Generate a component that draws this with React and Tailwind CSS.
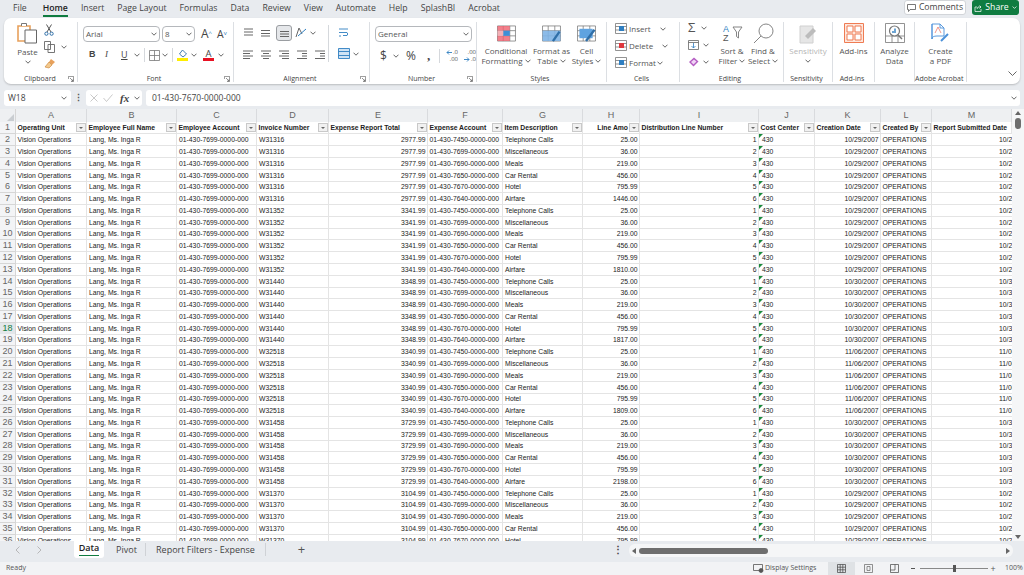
import React from "react";

const FONT = "font-['Open_Sans','Noto_Sans',sans-serif]";
const GRID_COLS = "grid grid-cols-[16px_71px_90px_80px_72px_99px_75px_80px_57px_119px_56px_66px_51px_80px]";

const tabs = ["File", "Home", "Insert", "Page Layout", "Formulas", "Data", "Review", "View", "Automate", "Help", "SplashBI", "Acrobat"];
const headers = [
  ["A", "Operating Unit"],
  ["B", "Employee Full Name"],
  ["C", "Employee Account"],
  ["D", "Invoice Number"],
  ["E", "Expense Report Total"],
  ["F", "Expense Account"],
  ["G", "Item Description"],
  ["H", "Line Amo"],
  ["I", "Distribution Line Number"],
  ["J", "Cost Center"],
  ["K", "Creation Date"],
  ["L", "Created By"],
  ["M", "Report Submitted Date"],
];
const groups = [
  ["W31316", "2977.99", "1446.00", "10/29/2007"],
  ["W31352", "3341.99", "1810.00", "10/29/2007"],
  ["W31440", "3348.99", "1817.00", "10/30/2007"],
  ["W32518", "3340.99", "1809.00", "11/06/2007"],
  ["W31458", "3729.99", "2198.00", "10/30/2007"],
  ["W31370", "3104.99", "1573.00", "10/29/2007"],
];
const items = [
  ["Telephone Calls", "7450", "25.00"],
  ["Miscellaneous", "7699", "36.00"],
  ["Meals", "7690", "219.00"],
  ["Car Rental", "7650", "456.00"],
  ["Hotel", "7670", "795.99"],
  ["Airfare", "7640", null],
];

const rows = [];
for (let r = 2; r <= 37; r++) {
  const g = groups[Math.floor((r - 2) / 6)];
  const i = (r - 2) % 6;
  rows.push({ n: r, invoice: g[0], total: g[1], account: items[i][1], item: items[i][0], amount: items[i][2] || g[2], line: i + 1, date: g[3] });
}

function Chev({ className = "" }) {
  return (
    <svg className={`w-[6px] h-[4px] shrink-0 ${className}`} viewBox="0 0 6 4" fill="none" stroke="#555" strokeWidth="0.9">
      <path d="M0.5 0.7 3 3.2 5.5 0.7" />
    </svg>
  );
}

function Launcher() {
  return (
    <svg className="w-[6px] h-[6px] justify-self-end" viewBox="0 0 6 6" fill="none" stroke="#666" strokeWidth="0.7">
      <path d="M0.4 3V0.4H5.6V5.6H3M2 2 5 5M5 3.4V5H3.4" />
    </svg>
  );
}

function Group({ width, label, launcher, children }) {
  return (
    <div className="flex flex-col shrink-0 h-[60px] mt-[4px] border-r border-[#dcdfe3]" style={{ width }}>
      <div className="flex-1 min-h-0 flex">{children}</div>
      <div className="grid grid-cols-[1fr_auto_1fr] items-center h-[8px] pr-[3px] text-[7px] leading-[8px] text-[#444] translate-y-[1px]">
        <span />
        <span className="whitespace-nowrap">{label}</span>
        {launcher ? <Launcher /> : <span />}
      </div>
    </div>
  );
}

function Select({ value, w }) {
  return (
    <div className={`${w} h-[16px] shrink-0 bg-white border border-[#b5b8bc] rounded-[4px] flex items-center justify-between px-[2px] text-[8px] text-[#555]`}>
      <span>{value}</span>
      <Chev />
    </div>
  );
}

function Lines({ rows: lineRows }) {
  return (
    <svg className="w-[11px] h-[9px]" viewBox="0 0 11 9" fill="none" stroke="#555" strokeWidth="0.9">
      {lineRows.map(([a, b, y]) => (
        <path key={y} d={`M${a} ${y}H${b}`} />
      ))}
    </svg>
  );
}

function Bigbtn({ label1, label2, chevOnSecond, width, grey, children }) {
  const tone = grey ? "text-[#b5b5b5]" : "text-[#555]";
  return (
    <div className={`flex flex-col items-center ${tone} text-[8px] leading-[10px]`} style={{ width }}>
      <div className="h-[22px] flex items-center justify-center">{children}</div>
      <div className="mt-[2px] whitespace-nowrap">{label1}</div>
      <div className="flex items-center gap-[2px] whitespace-nowrap h-[10px]">
        {label2}
        {chevOnSecond && <Chev />}
      </div>
    </div>
  );
}

function TableIcon({ children }) {
  return (
    <svg className="w-[21px] h-[17px]" viewBox="0 0 21 18" fill="none">
      <path d="M1 1H20V17H1Z M1 6H20 M1 11.5H20 M7 1V17 M14 1V17" stroke="#777" strokeWidth="0.8" />
      {children}
    </svg>
  );
}

function Clipboard() {
  return (
    <svg className="w-[21px] h-[22px]" viewBox="0 0 21 22" fill="none">
      <path d="M1 4H13V19H1Z" fill="#fff" stroke="#e8a15c" strokeWidth="1.6" />
      <path d="M4.5 4V1.5H9.5V4" fill="#fff" stroke="#777" strokeWidth="1" />
      <path d="M8 8H19.5V21H8Z" fill="#fff" stroke="#666" strokeWidth="1" />
    </svg>
  );
}

function DecimalIcon({ top, bottom, arrow }) {
  return (
    <div className="w-[14px] flex flex-col items-end text-[6px] leading-[7px] text-[#555]">
      <div className="flex items-center gap-[1px]">
        {arrow === "top" && (
          <svg className="w-[6px] h-[5px]" viewBox="0 0 6 5" fill="none" stroke="#2f7fc1" strokeWidth="0.9">
            <path d="M6 2.5H1M3 0.5 1 2.5 3 4.5" />
          </svg>
        )}
        {top}
      </div>
      <div className="flex items-center gap-[1px]">
        {arrow === "bottom" && (
          <svg className="w-[6px] h-[5px]" viewBox="0 0 6 5" fill="none" stroke="#2f7fc1" strokeWidth="0.9">
            <path d="M0 2.5H5M3 0.5 5 2.5 3 4.5" />
          </svg>
        )}
        {bottom}
      </div>
    </div>
  );
}

function Row({ row }) {
  const cell = "border-r border-b border-[#e4e4e4] px-[1.5px] overflow-hidden whitespace-nowrap";
  const active = row.n === 18;
  return (
    <div className={`${GRID_COLS} h-[11.79px] leading-[12px]`}>
      <div className={`border-r border-b border-[#d6d6d6] text-center text-[9px] leading-[11px] ${active ? "text-[#107c41] bg-[#e3e7ea]" : "text-[#666] bg-[#f3f4f6]"}`}>{row.n}</div>
      <div className={cell}>Vision Operations</div>
      <div className={`${cell} pl-[2px]`}>Lang, Ms. Inga R</div>
      <div className={`${cell} pl-[2px]`}>01-430-7699-0000-000</div>
      <div className={`${cell} pl-[2px]`}>{row.invoice}</div>
      <div className={`${cell} text-right`}>{row.total}</div>
      <div className={cell}>01-430-{row.account}-0000-000</div>
      <div className={`${cell} pl-[2px]`}>{row.item}</div>
      <div className={`${cell} text-right`}>{row.amount}</div>
      <div className={`${cell} text-right`}>{row.line}</div>
      <div className={`${cell} relative pl-[3px]`}>
        <span className="absolute left-0 top-0 w-0 h-0 border-t-[4px] border-r-[4px] border-t-[#1a8a3c] border-r-transparent" />
        430
      </div>
      <div className={`${cell} text-right`}>{row.date}</div>
      <div className={cell}>OPERATIONS</div>
      <div className="border-b border-[#e4e4e4] overflow-hidden whitespace-nowrap pl-[67px]">{row.date}</div>
    </div>
  );
}

function Ribbon() {
  return (
    <div className="mx-[4px] h-[66px] bg-white rounded-[7px] shadow-[0_1px_2px_rgba(0,0,0,0.2)] flex pl-[2px]">
      <Group width="72px" label="Clipboard" launcher>
        <div className="w-[37px] pl-[6px] flex flex-col items-center text-[8px] text-[#555] leading-[10px]">
          <Clipboard />
          <div className="mt-[3px]">Paste</div>
          <Chev className="mt-[3px]" />
        </div>
        <div className="flex flex-col gap-[5px] pt-[2px] pl-[1px]">
          <svg className="w-[10px] h-[12px]" viewBox="0 0 10 12" fill="none" stroke="#2f6fa8" strokeWidth="1">
            <path d="M2.5 0.5 7 8M7.5 0.5 3 8" stroke="#555" />
            <circle cx="2.4" cy="9.7" r="1.6" />
            <circle cx="7.6" cy="9.7" r="1.6" />
          </svg>
          <div className="flex items-center gap-[6px]">
            <svg className="w-[11px] h-[12px]" viewBox="0 0 11 12" fill="none" stroke="#666" strokeWidth="0.9">
              <path d="M0.5 0.5H6.5V8.5H0.5ZM4 3.5H10.5V11.5H4Z" fill="#fff" />
            </svg>
            <Chev />
          </div>
          <svg className="w-[12px] h-[11px]" viewBox="0 0 12 11">
            <path d="M7 1 11 4 8 7 5 4Z" fill="#e8a15c" />
            <path d="M5 4 8 7 5 10 1 9Z" fill="#f3c98d" stroke="#c77d2e" strokeWidth="0.6" />
          </svg>
        </div>
      </Group>

      <Group width="156px" label="Font" launcher>
        <div className="pl-[5px] pt-[4px] flex flex-col gap-[6px]">
          <div className="flex items-center gap-[2px]">
            <Select value="Arial" w="w-[77px]" />
            <Select value="8" w="w-[33px]" />
            <span className="ml-[4px] text-[12px] leading-none text-[#444]">A<sup className="text-[6px] text-[#2f7fc1]">^</sup></span>
            <span className="ml-[3px] text-[10.5px] leading-none text-[#444]">A<sup className="text-[6px] text-[#2f7fc1]">v</sup></span>
          </div>
          <div className="flex items-center h-[14px] pl-[6px] text-[9px] text-[#444]">
            <span className="font-['Liberation_Sans'] font-bold w-[16px]">B</span>
            <span className="font-['Liberation_Serif'] italic w-[16px]">I</span>
            <span className="underline w-[13px]">U</span>
            <Chev />
            <span className="ml-[4px] mr-[3px] w-px h-[14px] bg-[#d5d8dc]" />
            <svg className="w-[11px] h-[11px] ml-[1px]" viewBox="0 0 11 11" fill="none" stroke="#777" strokeWidth="0.8">
              <path d="M0.5 0.5H10.5V10.5H0.5ZM5.5 0.5V10.5M0.5 5.5H10.5" />
            </svg>
            <Chev className="ml-[2px]" />
            <span className="ml-[4px] mr-[4px] w-px h-[14px] bg-[#d5d8dc]" />
            <div className="flex flex-col items-center w-[11px]">
              <svg className="w-[10px] h-[9px]" viewBox="0 0 10 9" fill="none" stroke="#2f6fa8" strokeWidth="0.9">
                <path d="M4.5 1 8.5 5 5 8 1.5 5Z" />
              </svg>
              <span className="w-[11px] h-[3px] bg-[#ffee00]" />
            </div>
            <Chev className="ml-[3px]" />
            <div className="flex flex-col items-center w-[11px] ml-[6px] text-[9.5px] leading-[9px] text-[#444]">
              A
              <span className="w-[11px] h-[3px] bg-[#e81123]" />
            </div>
            <Chev className="ml-[4px]" />
          </div>
        </div>
      </Group>

      <Group width="136px" label="Alignment" launcher>
        <div className="pl-[9px] pt-[3px] flex">
          <div className="flex flex-col gap-[8px] w-[85px]">
            <div className="flex items-center h-[15px]">
              <div className="w-[17px]"><Lines rows={[[1, 10, 1], [1, 10, 4], [1, 10, 7]]} /></div>
              <div className="w-[16px]"><Lines rows={[[1, 10, 2.5], [1, 10, 5.5], [1, 10, 8]]} /></div>
              <div className="w-[16px] h-[16px] mr-[3px] rounded-[3px] border border-[#9a9da1] bg-[#e5e7ea] flex items-center justify-center"><Lines rows={[[1, 10, 3.5], [1, 10, 6], [1, 10, 8.5]]} /></div>
              <svg className="w-[12px] h-[11px]" viewBox="0 0 12 11" fill="none" strokeWidth="1">
                <path d="M1 10 4 1 7 7" stroke="#666" />
                <path d="M3 9 11 2" stroke="#2f7fc1" />
              </svg>
              <Chev className="ml-[3px]" />
            </div>
            <div className="flex items-center h-[12px] gap-[7px]">
              <Lines rows={[[0, 10, 1], [0, 7, 3.5], [0, 10, 6], [0, 7, 8.5]]} />
              <Lines rows={[[0, 10, 1], [2, 8, 3.5], [0, 10, 6], [2, 8, 8.5]]} />
              <Lines rows={[[0, 10, 1], [3, 10, 3.5], [0, 10, 6], [3, 10, 8.5]]} />
              <Lines rows={[[0, 10, 1], [5, 10, 3.5], [5, 10, 6], [0, 10, 8.5]]} />
              <Lines rows={[[0, 10, 1], [5, 10, 3.5], [5, 10, 6], [0, 10, 8.5]]} />
            </div>
          </div>
          <div className="border-l border-[#d5d8dc] h-[37px] pl-[9px] flex flex-col gap-[10px] pt-[2px]">
            <svg className="w-[11px] h-[11px]" viewBox="0 0 11 11" fill="none" stroke="#2f7fc1" strokeWidth="0.9">
              <path d="M1 2H10M1 5.5H9Q10.5 7 9 8.5H5M1 9H3" />
            </svg>
            <div className="flex items-center gap-[3px]">
              <svg className="w-[12px] h-[11px]" viewBox="0 0 12 11" fill="#cfe3f5" stroke="#2f7fc1" strokeWidth="0.9">
                <path d="M0.5 0.5H11.5V10.5H0.5ZM0.5 3.5H11.5M0.5 7.5H11.5" />
              </svg>
              <Chev />
            </div>
          </div>
        </div>
      </Group>

      <Group width="107px" label="Number" launcher>
        <div className="pl-[5px] pt-[4px] flex flex-col gap-[6px]">
          <Select value="General" w="w-[97px]" />
          <div className="flex items-center h-[15px] pl-[5px] text-[#444]">
            <span className="text-[12px] w-[11px]">$</span>
            <Chev className="ml-[2px]" />
            <span className="text-[12px] ml-[7px] w-[17px]">%</span>
            <span className="font-bold text-[13px] ml-[4px] w-[8px] font-['Liberation_Serif'] leading-[10px]">,</span>
            <span className="ml-[4px] w-px h-[14px] bg-[#d5d8dc]" />
            <span className="ml-[4px]"><DecimalIcon top=".0" bottom=".00" arrow="top" /></span>
            <span className="ml-[4px]"><DecimalIcon top=".00" bottom=".0" arrow="bottom" /></span>
          </div>
        </div>
      </Group>

      <Group width="130px" label="Styles">
        <div className="flex pl-[4px]">
          <Bigbtn label1="Conditional" label2="Formatting" chevOnSecond width="50px">
            <TableIcon>
              <path d="M1 1H14V6H1ZM1 11.5H14V17H1Z" fill="#f0606e" fillOpacity="0.8" />
              <path d="M7 6H14V11.5H7Z" fill="#3f8fd6" />
              <path d="M1 6H7V11.5H1Z" fill="#f4b0b6" />
            </TableIcon>
          </Bigbtn>
          <Bigbtn label1="Format as" label2="Table" chevOnSecond width="41px">
            <TableIcon>
              <path d="M1 6H20V17H1Z" fill="#7fb4e6" fillOpacity="0.9" />
              <path d="M12 17 19 7" stroke="#2f6fa8" strokeWidth="2.5" />
            </TableIcon>
          </Bigbtn>
          <Bigbtn label1="Cell" label2="Styles" chevOnSecond width="29px">
            <TableIcon>
              <path d="M3 4H17V14H3Z" fill="#5fa3e0" />
              <path d="M10 17 19 5" stroke="#2f6fa8" strokeWidth="2.5" />
            </TableIcon>
          </Bigbtn>
        </div>
      </Group>

      <Group width="73px" label="Cells">
        <div className="pl-[8px] pt-[1px] flex flex-col gap-[6px] text-[8px] leading-[11px] text-[#555]">
          {[
            ["Insert", "#2f7fc1", "ml-[9px]"],
            ["Delete", "#e0393e", "ml-[9px]"],
            ["Format", "#2f7fc1", "ml-[1px]"],
          ].map(([t, c, gap]) => (
            <div key={t} className="flex items-center h-[11px]">
              <svg className="w-[12px] h-[11px] mr-[2px]" viewBox="0 0 12 11" fill="none" stroke="#777" strokeWidth="0.8">
                <path d="M0.5 0.5H11.5V10.5H0.5ZM0.5 3.5H11.5M0.5 7H11.5" />
                <path d="M4 3H9V8H4Z" fill={c} stroke="none" />
              </svg>
              {t}
              <Chev className={gap} />
            </div>
          ))}
        </div>
      </Group>

      <Group width="104px" label="Editing">
        <div className="pl-[8px] flex flex-col gap-[5px] w-[36px]">
          <div className="flex items-center gap-[6px] h-[12px] text-[13px] text-[#555]">Σ<Chev /></div>
          <div className="flex items-center gap-[4px] h-[12px]">
            <svg className="w-[11px] h-[10px] shrink-0" viewBox="0 0 11 10" fill="none" stroke="#666" strokeWidth="0.8">
              <path d="M0.5 0.5H10.5V9.5H0.5ZM0.5 2.5H10.5" />
              <path d="M5.5 3V8M3.5 6 5.5 8 7.5 6" stroke="#2f7fc1" />
            </svg>
            <Chev />
          </div>
          <div className="flex items-center gap-[4px] h-[12px]">
            <svg className="w-[11px] h-[10px] shrink-0" viewBox="0 0 11 10">
              <path d="M1 5 6 0.5 10.5 4.5 5.5 9.5Z" fill="#b45cc2" />
              <path d="M3 5 6 2.5 8.5 4.5 5.5 7.5Z" fill="#f0d4f5" />
            </svg>
            <Chev />
          </div>
        </div>
        <Bigbtn label1="Sort &" label2="Filter" chevOnSecond width="32px">
          <svg className="w-[21px] h-[20px]" viewBox="0 0 21 20" fill="none">
            <path d="M11 4H20L16.5 9V15L14.5 13.5V9Z" stroke="#777" strokeWidth="0.9" />
            <text x="1" y="8.5" fontSize="9" fill="#2f7fc1" fontFamily="Liberation Sans">A</text>
            <text x="1" y="18" fontSize="9" fill="#555" fontFamily="Liberation Sans">Z</text>
          </svg>
        </Bigbtn>
        <Bigbtn label1="Find &" label2="Select" chevOnSecond width="30px">
          <svg className="w-[21px] h-[21px]" viewBox="0 0 21 21" fill="none" stroke="#777" strokeWidth="0.9">
            <circle cx="13" cy="8" r="7" />
            <path d="M8 13 1 20" />
          </svg>
        </Bigbtn>
      </Group>

      <Group width="49px" label="Sensitivity">
        <Bigbtn label1="Sensitivity" chevOnSecond width="48px" grey>
          <svg className="w-[19px] h-[21px]" viewBox="0 0 19 21">
            <path d="M1 3H14V20H1Z" fill="#e6e6e6" stroke="#d0d0d0" />
            <path d="M6 13 14 5 17 8 9 16Z" fill="#bcbcbc" />
          </svg>
        </Bigbtn>
      </Group>

      <Group width="42px" label="Add-ins">
        <Bigbtn label1="Add-ins" width="41px">
          <svg className="w-[20px] h-[20px]" viewBox="0 0 20 20" fill="none" stroke="#ef7b52" strokeWidth="1">
            <path d="M0.5 0.5H19.5V19.5H0.5Z" fill="#fde7dd" />
            <path d="M3 3H9V9H3ZM11 3H17V9H11ZM3 11H9V17H3ZM11 11H17V17H11Z" fill="#fff" />
          </svg>
        </Bigbtn>
      </Group>

      <Group width="40px" label="">
        <Bigbtn label1="Analyze" label2="Data" width="39px">
          <svg className="w-[20px] h-[20px]" viewBox="0 0 20 20" fill="none" stroke="#777" strokeWidth="0.8">
            <path d="M0.5 0.5H19.5V19.5H0.5ZM0.5 13H19.5M7 13V19.5M13 13V19.5" />
            <circle cx="9.5" cy="8" r="5" fill="#fff" strokeWidth="1.2" />
            <path d="M8 10V8M10 10V5.5" stroke="#2f7fc1" strokeWidth="1.4" />
            <path d="M13 12 17 16" strokeWidth="1.4" />
          </svg>
        </Bigbtn>
      </Group>

      <Group width="52px" label="Adobe Acrobat">
        <Bigbtn label1="Create" label2="a PDF" width="51px">
          <svg className="w-[19px] h-[20px]" viewBox="0 0 19 20" fill="none" stroke="#4a90d9" strokeWidth="0.9">
            <path d="M1 1H9L13 5V13H6Q1 13 1 16ZM1 1V16M9 1V5H13" />
            <path d="M4 10 7 4 10 10" stroke="#e86a5c" strokeWidth="0.7" />
            <path d="M10 18 17 11" strokeWidth="2" />
          </svg>
        </Bigbtn>
      </Group>

      <div className="flex-1 flex items-end justify-end pr-[3px] pb-[8px]">
        <svg className="w-[9px] h-[5px]" viewBox="0 0 9 5" fill="none" stroke="#555" strokeWidth="0.9">
          <path d="M0.5 0.5 4.5 4.5 8.5 0.5" />
        </svg>
      </div>
    </div>
  );
}

export default function App() {
  return (
    <div className={`w-[1024px] h-[575px] overflow-hidden flex flex-col bg-[#e8ebef] ${FONT}`}>
      {/* menu */}
      <div className="h-[18px] shrink-0 flex items-start justify-between pl-[13px] pr-[5px]">
        <div className="flex gap-[13px] text-[8.7px] leading-[17px] text-[#444]">
          {tabs.map((t) =>
            t === "Home" ? (
              <div key={t} className="relative font-semibold text-[#222] h-[17px] ml-[3px] border-b-2 border-[#107c41]">{t}</div>
            ) : (
              <div key={t} className="whitespace-nowrap">{t}</div>
            )
          )}
        </div>
        <div className="flex gap-[6px] h-[15px]">
          <div className="w-[62px] bg-white border border-[#d2d5d9] rounded-[3px] flex items-center justify-center gap-[3px] text-[8.7px] text-[#444]">
            <svg className="w-[9px] h-[8px]" viewBox="0 0 9 8" fill="none" stroke="#555" strokeWidth="0.8">
              <path d="M0.5 0.5H8.5V5.5H3L1.5 7.5V5.5H0.5Z" />
            </svg>
            Comments
          </div>
          <div className="w-[47px] bg-[#107c41] rounded-[3px] flex items-center justify-center gap-[3px] text-[8.7px] text-white">
            <svg className="w-[8px] h-[8px]" viewBox="0 0 8 8" fill="none" stroke="#fff" strokeWidth="0.7">
              <path d="M1 3H3M1 3V7.5H7V5M3 5 4 3H7M5.5 1.5 7 3 5.5 4.5" />
            </svg>
            Share
            <svg className="w-[5px] h-[3px]" viewBox="0 0 6 4" fill="none" stroke="#fff" strokeWidth="1">
              <path d="M0.5 0.7 3 3.2 5.5 0.7" />
            </svg>
          </div>
        </div>
      </div>

      <Ribbon />

      {/* formula bar */}
      <div className="h-[16px] shrink-0 mt-[6px] mx-[4px] flex items-stretch text-[8.5px] text-[#444]">
        <div className="w-[67px] bg-white rounded-[3px] flex items-center justify-between px-[4px]">
          W18
          <Chev />
        </div>
        <div className="w-[15px] flex items-center justify-center font-bold text-[#555]">⋮</div>
        <div className="w-[56px] bg-white rounded-[3px] flex items-center pl-[4px] gap-[5px]">
          <svg className="w-[8px] h-[8px]" viewBox="0 0 8 8" fill="none" stroke="#bbb" strokeWidth="0.8"><path d="M0.5 0.5 7.5 7.5M7.5 0.5 0.5 7.5" /></svg>
          <svg className="w-[10px] h-[8px]" viewBox="0 0 10 8" fill="none" stroke="#bbb" strokeWidth="0.8"><path d="M0.5 4 3.5 7.5 9.5 0.5" /></svg>
          <span className="font-['Liberation_Serif'] italic font-bold text-[11px] text-[#444] ml-[2px]">fx</span>
          <Chev />
        </div>
        <div className="flex-1 ml-[4px] bg-white rounded-[3px] flex items-center justify-between pl-[6px] pr-[3px]">
          01-430-7670-0000-000
          <Chev />
        </div>
      </div>

      {/* sheet */}
      <div className="flex-1 min-h-0 mt-[3px] flex bg-white font-['Liberation_Sans',sans-serif] text-[6.8px] text-[#222]">
        <div className="w-[1012px] shrink-0 overflow-hidden">
          <div className={`${GRID_COLS} h-[13.4px] bg-[#eef0f2] text-[9px] leading-[13px] text-[#666] text-center`}>
            <div className="relative border-r border-[#d6d6d6]">
              <svg className="absolute right-[1px] bottom-[1px] w-[7px] h-[7px]" viewBox="0 0 7 7"><path d="M7 0V7H0Z" fill="#c9cdd1" /></svg>
            </div>
            {headers.map(([l]) => (
              <div key={l} className="border-r border-[#d9dbde]">{l}</div>
            ))}
          </div>
          <div className={`${GRID_COLS} h-[11.79px] leading-[12px]`}>
            <div className="border-r border-b border-[#d6d6d6] bg-[#f3f4f6] text-center text-[9px] leading-[11px] text-[#666]">1</div>
            {headers.map(([l, h]) => (
              <div key={l} className="border-r border-b border-[#e4e4e4] flex items-center justify-between pl-[1.5px] overflow-hidden whitespace-nowrap font-bold text-[#222]">
                <span className={l === "H" ? "ml-auto mr-[1px]" : ""}>{h}</span>
                {l !== "M" && (
                  <span className="w-[10px] h-[9px] shrink-0 bg-[#f1f1f1] border border-[#c9c9c9] flex items-center justify-center">
                    <span className="w-0 h-0 border-l-[2px] border-r-[2px] border-t-[2px] border-l-transparent border-r-transparent border-t-[#666]" />
                  </span>
                )}
              </div>
            ))}
          </div>
          {rows.map((row) => (
            <Row key={row.n} row={row} />
          ))}
        </div>
        <div className="w-[12px] shrink-0 bg-[#f5f6f7] flex flex-col items-center justify-between py-[2px]">
          <div className="flex flex-col items-center gap-[3px]">
            <span className="w-0 h-0 border-l-[3px] border-r-[3px] border-b-[4px] border-l-transparent border-r-transparent border-b-[#666]" />
            <span className="w-[6px] h-[11px] rounded-[3px] bg-[#6e6e6e]" />
          </div>
          <span className="w-0 h-0 border-l-[3px] border-r-[3px] border-t-[4px] border-l-transparent border-r-transparent border-t-[#666]" />
        </div>
      </div>

      {/* sheet tabs */}
      <div className="h-[21px] shrink-0 flex items-start text-[#444]">
        <div className="w-[74px] h-[17px] flex items-center pl-[15px] gap-[17px] shrink-0">
          <svg className="w-[5px] h-[8px]" viewBox="0 0 5 8" fill="none" stroke="#aaa" strokeWidth="0.8"><path d="M4.5 0.5 1 4 4.5 7.5" /></svg>
          <svg className="w-[5px] h-[8px]" viewBox="0 0 5 8" fill="none" stroke="#aaa" strokeWidth="0.8"><path d="M0.5 0.5 4 4 0.5 7.5" /></svg>
        </div>
        <div className="w-[30px] h-[17px] shrink-0 bg-white rounded-b-[3px] flex flex-col items-center text-[9px] leading-[14px] font-semibold text-[#222]">
          Data
          <span className="w-[20px] h-[1px] bg-[#107c41]" />
        </div>
        <div className="w-[41px] h-[17px] shrink-0 flex items-center justify-center text-[9px] pl-[4px]">Pivot</div>
        <span className="w-px h-[13px] mt-[2px] bg-[#cfd2d6]" />
        <div className="w-[119px] h-[17px] shrink-0 flex items-center justify-center text-[9px]">Report Filters - Expense</div>
        <span className="w-px h-[13px] mt-[2px] bg-[#cfd2d6]" />
        <div className="w-[56px] h-[17px] shrink-0 flex items-center justify-center text-[13px] text-[#555] pl-[15px]">+</div>
        <div className="flex-1 flex justify-end items-center h-[17px] pr-[6px] font-bold text-[10px]">⋮</div>
        <div className="w-[384px] h-[13px] mt-[3px] mr-[11px] shrink-0 bg-[#f5f6f7] rounded-[6px] flex items-center px-[3px]">
          <span className="w-0 h-0 border-t-[3px] border-b-[3px] border-r-[4px] border-t-transparent border-b-transparent border-r-[#666]" />
          <span className="ml-[3px] w-[129px] h-[6px] rounded-[3px] bg-[#6e6e6e]" />
          <span className="ml-auto w-0 h-0 border-t-[3px] border-b-[3px] border-l-[4px] border-t-transparent border-b-transparent border-l-[#666]" />
        </div>
      </div>

      {/* status bar */}
      <div className="h-[13px] shrink-0 bg-[#f2f3f5] flex items-center pl-[6px] text-[7px] text-[#555]">
        <span>Ready</span>
        <div className="ml-auto flex items-center h-full pr-[3px]">
          <svg className="w-[11px] h-[9px] mr-[1px]" viewBox="0 0 11 9" fill="none" stroke="#555" strokeWidth="0.8">
            <path d="M0.5 0.5H9.5V6.5H0.5Z" />
            <circle cx="8" cy="6.5" r="2" fill="#555" />
          </svg>
          <span className="w-[50px] whitespace-nowrap">Display Settings</span>
          <div className="ml-[13px] w-[27px] h-full bg-[#dfe2e5] flex items-center justify-center">
            <svg className="w-[9px] h-[9px]" viewBox="0 0 9 9" fill="none" stroke="#444" strokeWidth="0.7">
              <path d="M0.5 0.5H8.5V8.5H0.5ZM3.2 0.5V8.5M5.8 0.5V8.5M0.5 3.2H8.5M0.5 5.8H8.5" />
            </svg>
          </div>
          <svg className="w-[9px] h-[9px] ml-[9px]" viewBox="0 0 9 9" fill="none" stroke="#666" strokeWidth="0.7">
            <path d="M0.5 0.5H8.5V8.5H0.5ZM3 2.5H6V6.5H3Z" />
          </svg>
          <svg className="w-[9px] h-[9px] ml-[17px]" viewBox="0 0 9 9" fill="none" stroke="#444" strokeWidth="0.7">
            <path d="M0.5 0.5H8.5V8.5H0.5ZM0.5 6H5V0.5" />
          </svg>
          <span className="ml-[12px] w-[4px] h-px bg-[#555]" />
          <div className="ml-[5px] w-[68px] h-px bg-[#888] flex items-center justify-center">
            <span className="w-[3px] h-[7px] bg-[#555]" />
          </div>
          <span className="ml-[2px] w-[6px] text-[9px] leading-[9px] text-center">+</span>
          <span className="ml-[9px] w-[16px] whitespace-nowrap">100%</span>
        </div>
      </div>
    </div>
  );
}
